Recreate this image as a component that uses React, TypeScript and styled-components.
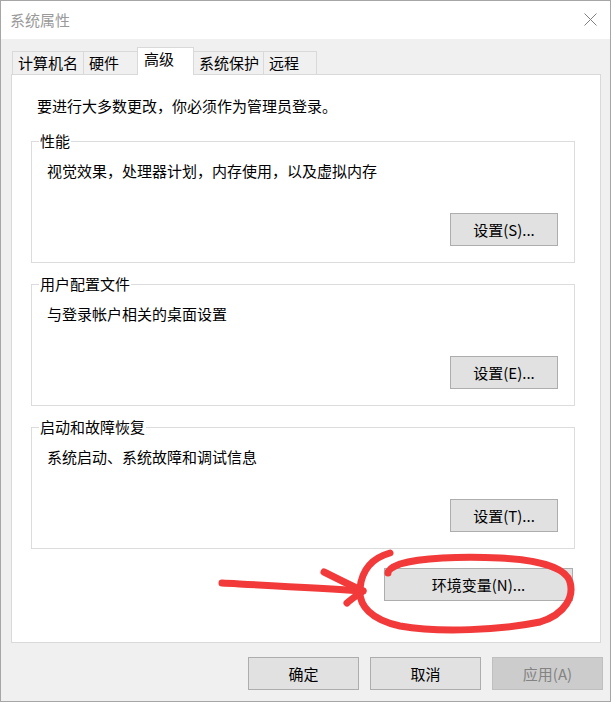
import React from "react";
import styled, { createGlobalStyle } from "styled-components";

const Global = createGlobalStyle`
  html, body { margin: 0; padding: 0; background: #ffffff; }
  body { font-family: "Noto Sans CJK SC", "Microsoft YaHei", sans-serif; }
  * { box-sizing: border-box; }
`;

const Window = styled.div`
  position: relative;
  width: 611px;
  height: 702px;
  border: 1px solid #a6a6a6;
  background: #f0f0f0;
  display: flex;
  flex-direction: column;
  font-size: 15px;
  color: #000;
`;

const TitleBar = styled.div`
  height: 38px;
  background: #ffffff;
  display: flex;
  align-items: center;
  justify-content: space-between;
  padding: 0 13px 0 9px;
  flex-shrink: 0;
`;

const Title = styled.span`
  color: #9a9a9a;
  font-size: 15px;
  line-height: 20px;
`;

const CloseIcon = styled.svg`
  width: 13px;
  height: 13px;
  margin-top: -2px;
`;

const Body = styled.div`
  flex: 1;
  display: flex;
  flex-direction: column;
  padding: 9px 9px 11px 10px;
`;

const TabStrip = styled.div`
  display: flex;
  align-items: flex-end;
  padding-left: 1px;
  height: 27px;
  position: relative;
  z-index: 1;
  margin-bottom: -1px;
`;

const Tab = styled.div<{ $w: number; $active?: boolean }>`
  width: ${(p) => p.$w}px;
  height: ${(p) => (p.$active ? 28 : 24)}px;
  margin-left: -1px;
  &:first-child { margin-left: 0; }
  border: 1px solid #d9d9d9;
  border-bottom: ${(p) => (p.$active ? "none" : "1px solid #d9d9d9")};
  background: ${(p) => (p.$active ? "#ffffff" : "#f0f0f0")};
  position: relative;
  z-index: ${(p) => (p.$active ? 2 : 1)};
  padding: ${(p) => (p.$active ? "1px 0 0 6px" : "1px 0 0 5px")};
  font-size: 15px;
  line-height: 20px;
  white-space: nowrap;
`;

const Panel = styled.div`
  height: 569px;
  background: #ffffff;
  border: 1px solid #d9d9d9;
  display: flex;
  flex-direction: column;
  padding: 21px 25px 0 19px;
`;

const Intro = styled.div`
  line-height: 20px;
  padding-left: 6px;
  margin-bottom: 25px;
`;

const Groups = styled.div`
  display: flex;
  flex-direction: column;
  gap: 21px;
`;

const Group = styled.div`
  position: relative;
  height: 122px;
  border: 1px solid #dcdcdc;
  display: flex;
  flex-direction: column;
  padding: 19px 16px 16px 15px;
`;

const GroupLabel = styled.span`
  position: absolute;
  top: -11px;
  left: 7px;
  padding: 0 1px;
  background: #ffffff;
  line-height: 20px;
`;

const GroupText = styled.div`
  line-height: 20px;
  flex: 1;
`;

const Button = styled.button<{ $w: number; $disabled?: boolean }>`
  width: ${(p) => p.$w}px;
  height: 33px;
  font-family: inherit;
  font-size: 15px;
  line-height: 20px;
  padding: 0;
  background: ${(p) => (p.$disabled ? "#cccccc" : "#e1e1e1")};
  border: 1px solid ${(p) => (p.$disabled ? "#bfbfbf" : "#adadad")};
  color: ${(p) => (p.$disabled ? "#838383" : "#000000")};
  align-self: flex-end;
  flex-shrink: 0;
`;

const EnvRow = styled.div`
  display: flex;
  justify-content: flex-end;
  padding-right: 2px;
  margin-top: 19px;
`;

const Footer = styled.div`
  display: flex;
  justify-content: flex-end;
  gap: 11px;
  margin-top: 14px;
  margin-right: -2px;
`;

const Overlay = styled.svg`
  position: absolute;
  left: -1px;
  top: -1px;
  width: 613px;
  height: 703px;
  pointer-events: none;
  z-index: 10;
`;

export default function App() {
  const groups = [
    { label: "性能", text: "视觉效果，处理器计划，内存使用，以及虚拟内存", btn: "设置(S)..." },
    { label: "用户配置文件", text: "与登录帐户相关的桌面设置", btn: "设置(E)..." },
    { label: "启动和故障恢复", text: "系统启动、系统故障和调试信息", btn: "设置(T)..." },
  ];
  return (
    <>
      <Global />
      <Window>
        <TitleBar>
          <Title>系统属性</Title>
          <CloseIcon viewBox="0 0 13 13">
            <path d="M0.5 0.5 L12.5 12.5 M12.5 0.5 L0.5 12.5" stroke="#808080" strokeWidth="1" fill="none" />
          </CloseIcon>
        </TitleBar>
        <Body>
          <TabStrip>
            <Tab $w={72}>计算机名</Tab>
            <Tab $w={55}>硬件</Tab>
            <Tab $w={57} $active>高级</Tab>
            <Tab $w={71}>系统保护</Tab>
            <Tab $w={54}>远程</Tab>
          </TabStrip>
          <Panel>
            <Intro>要进行大多数更改，你必须作为管理员登录。</Intro>
            <Groups>
              {groups.map((g) => (
                <Group key={g.label}>
                  <GroupLabel>{g.label}</GroupLabel>
                  <GroupText>{g.text}</GroupText>
                  <Button $w={108}>{g.btn}</Button>
                </Group>
              ))}
            </Groups>
            <EnvRow>
              <Button $w={189}>环境变量(N)...</Button>
            </EnvRow>
          </Panel>
          <Footer>
            <Button $w={111}>确定</Button>
            <Button $w={111}>取消</Button>
            <Button $w={111} $disabled>应用(A)</Button>
          </Footer>
        </Body>
        <Overlay viewBox="0 0 613 703">
          <g stroke="#f23a3a" strokeWidth="7" fill="none" strokeLinecap="round" strokeLinejoin="round">
            <path d="M222 583 C 260 585, 320 588, 363 591" />
            <path d="M324 572 C 340 580, 352 586, 363 591 C 356 596, 350 600, 347 603" />
            <path d="M390 553 C 372 558, 362 570, 360 588 C 358 606, 372 620, 400 626 C 440 633, 500 630, 540 622 C 566 614, 574 596, 570 582 C 566 568, 540 560, 500 558 C 460 556, 420 558, 400 564 C 392 567, 388 570, 388 573" />
          </g>
        </Overlay>
      </Window>
    </>
  );
}
